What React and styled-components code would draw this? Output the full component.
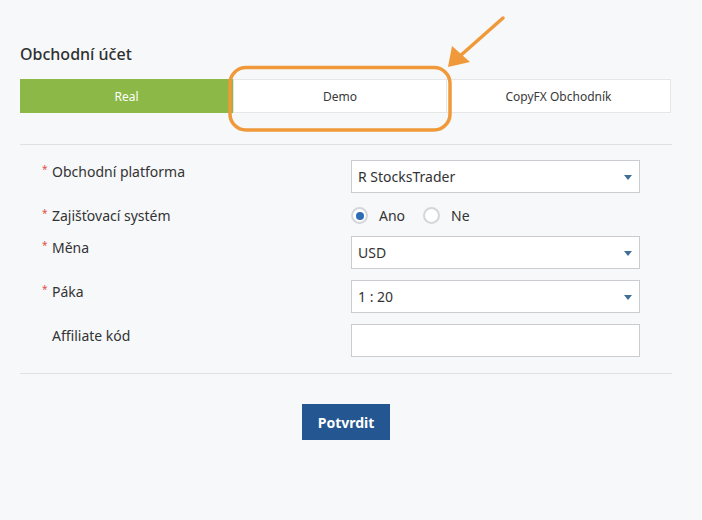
import React from "react";
import styled, { createGlobalStyle } from "styled-components";

const Global = createGlobalStyle`
  html, body { margin: 0; padding: 0; background: #f7f8fa; }
  body { font-family: "Noto Sans", "Open Sans", sans-serif; color: #333; }
`;

const Page = styled.div`
  position: relative;
  padding: 43px 30px 40px 20px;
  min-height: 520px;
  box-sizing: border-box;
  width: 702px;
`;

const Title = styled.h2`
  margin: 0;
  font-size: 16px;
  line-height: 22px;
  font-weight: 500;
  color: #2f2f2f;
`;

const Tabs = styled.div`
  display: grid;
  grid-template-columns: 213px 214px 1fr;
  margin-top: 14px;
  width: 651px;
  height: 34px;
`;

const Tab = styled.div`
  display: flex;
  align-items: center;
  justify-content: center;
  font-size: 12px;
  box-sizing: border-box;
  background: ${(p) => (p.$active ? "#8bb847" : "#fff")};
  color: ${(p) => (p.$active ? "#fff" : "#3a3a3a")};
  border: ${(p) => (p.$active ? "none" : "1px solid #e4e6e8")};
  border-left-width: ${(p) => (p.$first ? "1px" : "0")};
`;

const Divider = styled.hr`
  margin: ${(p) => p.$m || "0"};
  border: none;
  border-top: 1px solid #dde2e5;
  width: 652px;
  height: 0;
`;

const Form = styled.div`
  display: flex;
  flex-direction: column;
  gap: 11px;
`;

const Row = styled.div`
  display: grid;
  grid-template-columns: 331px 289px;
  align-items: start;
`;

const Label = styled.div`
  display: flex;
  padding-left: 22px;
  padding-top: 2px;
  font-size: 14px;
  line-height: 19px;
  color: #333;
`;

const Star = styled.span`
  width: 10px;
  color: #e0524a;
  font-size: 10px;
  line-height: 14px;
`;

const SelectBox = styled.div`
  position: relative;
  height: 33px;
  box-sizing: border-box;
  border: 1px solid #c9cdd1;
  background: #fff;
  display: flex;
  align-items: center;
  padding-left: 6px;
  font-size: 14px;
  color: #333;
`;

const Caret = styled.span`
  position: absolute;
  right: 7px;
  top: 14px;
  width: 0;
  height: 0;
  border-left: 4px solid transparent;
  border-right: 4px solid transparent;
  border-top: 5px solid #3f6f98;
`;

const Input = styled.div`
  height: 33px;
  box-sizing: border-box;
  border: 1px solid #c9cdd1;
  background: #fff;
`;

const Radios = styled.div`
  display: flex;
  align-items: center;
  box-sizing: border-box;
  height: 21px;
  padding-top: 2px;
  font-size: 14px;
  line-height: 19px;
`;

const RadioItem = styled.label`
  display: flex;
  align-items: center;
  gap: 11px;
  margin-right: ${(p) => p.$mr || "0"};
`;

const Circle = styled.span`
  width: 17px;
  height: 17px;
  box-sizing: border-box;
  border-radius: 50%;
  border: 2px solid #d3d6da;
  background: #fff;
  display: flex;
  align-items: center;
  justify-content: center;
  &::after {
    content: "";
    width: 8px;
    height: 8px;
    border-radius: 50%;
    background: ${(p) => (p.$checked ? "#2e6db4" : "transparent")};
  }
`;

const Actions = styled.div`
  display: flex;
  justify-content: center;
  width: 652px;
  margin-top: 30px;
`;

const Button = styled.button`
  width: 88px;
  height: 36px;
  border: none;
  background: #245791;
  color: #fff;
  font-family: "Noto Sans", sans-serif;
  font-weight: 700;
  font-size: 14px;
  padding: 0;
`;

const Overlay = styled.svg`
  position: absolute;
  left: 0;
  top: 0;
  pointer-events: none;
`;

function Select({ value }) {
  return (
    <SelectBox>
      {value}
      <Caret />
    </SelectBox>
  );
}

function FieldLabel({ required, children }) {
  return (
    <Label>
      <Star>{required ? "*" : ""}</Star>
      {children}
    </Label>
  );
}

export default function App() {
  return (
    <>
      <Global />
      <Page>
        <Title>Obchodní účet</Title>
        <Tabs>
          <Tab $active $first>Real</Tab>
          <Tab $first>Demo</Tab>
          <Tab>CopyFX Obchodník</Tab>
        </Tabs>
        <Divider $m="31px 0 15px 0" />
        <Form>
          <Row>
            <FieldLabel required>Obchodní platforma</FieldLabel>
            <Select value="R StocksTrader" />
          </Row>
          <Row>
            <FieldLabel required>Zajišťovací systém</FieldLabel>
            <Radios>
              <RadioItem $mr="18px">
                <Circle $checked />
                Ano
              </RadioItem>
              <RadioItem>
                <Circle />
                Ne
              </RadioItem>
            </Radios>
          </Row>
          <Row>
            <FieldLabel required>Měna</FieldLabel>
            <Select value="USD" />
          </Row>
          <Row>
            <FieldLabel required>Páka</FieldLabel>
            <Select value="1 : 20" />
          </Row>
          <Row>
            <FieldLabel>Affiliate kód</FieldLabel>
            <Input />
          </Row>
        </Form>
        <Divider $m="16px 0 0 0" />
        <Actions>
          <Button>Potvrdit</Button>
        </Actions>
        <Overlay width="702" height="140" viewBox="0 0 702 140">
          <rect x="230" y="67.5" width="220" height="62.5" rx="16" fill="none" stroke="#f0993a" strokeWidth="3.5" />
          <line x1="503" y1="18" x2="460" y2="56" stroke="#f0993a" strokeWidth="3.5" strokeLinecap="round" />
          <polygon points="448,67 452,46 470,62" fill="#f0993a" />
        </Overlay>
      </Page>
    </>
  );
}
